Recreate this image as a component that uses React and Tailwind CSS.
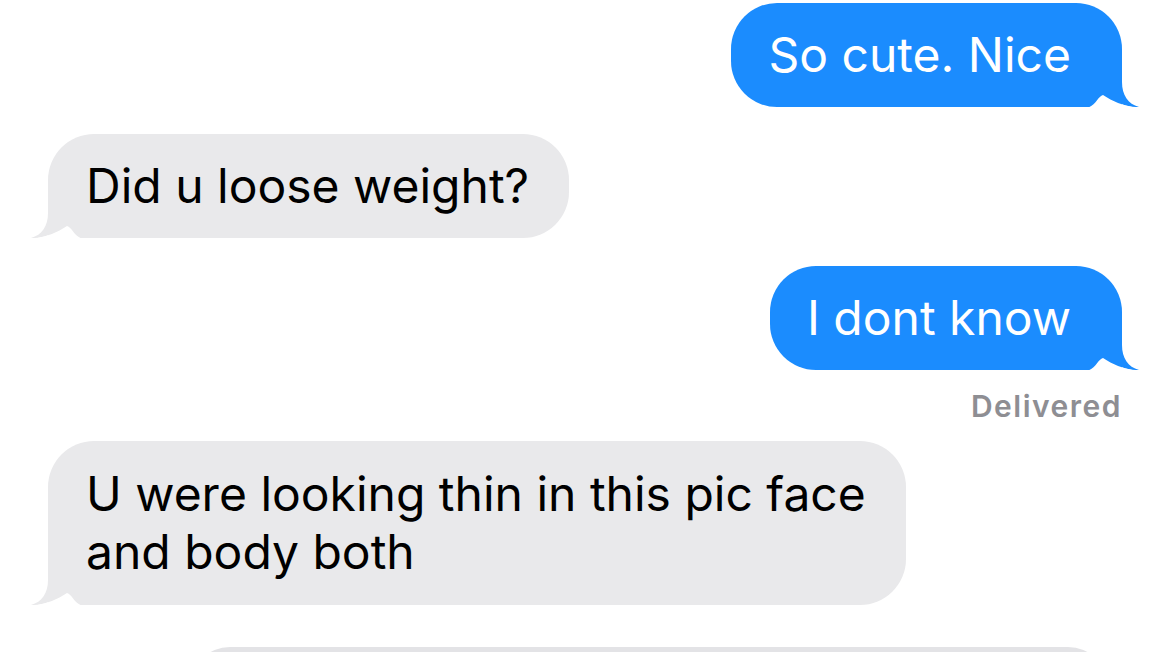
import React from "react";

const BLUE = "#1b8cfe";
const GRAY = "#e9e9eb";

function Tail({ color, side }) {
  const pos = side === "right" ? "right-[-20px]" : "left-[-20px] -scale-x-100";
  return (
    <svg
      className={`absolute bottom-0 ${pos}`}
      width="60"
      height="34"
      viewBox="0 0 60 34"
    >
      <path
        d="M16 0 L40 0 L40 9 C40 22 46 31 57 34 C47 34.5 33 30 21 22 L16 22 Z"
        fill={color}
      />
      <path
        d="M5 34.5 C13 34 16 23 21 22 C33 30 47 34.5 57 34.5 Z"
        fill="#ffffff"
      />
    </svg>
  );
}

function Bubble({ side, children, className = "" }) {
  const right = side === "right";
  return (
    <div
      className={`relative ${
        right
          ? "self-end mr-[48px] bg-[#1b8cfe] text-white rounded-[46px] rounded-br-none pl-[37px] pr-[51px]"
          : "self-start ml-[48px] bg-[#e9e9eb] text-black rounded-[46px] rounded-bl-none pl-[38px] pr-[40px]"
      } text-[48px] leading-[58px] ${className}`}
    >
      <span className="relative z-10">{children}</span>
      <Tail color={right ? BLUE : GRAY} side={side} />
    </div>
  );
}

export default function App() {
  return (
    <div
      className="w-[1170px] h-[652px] overflow-hidden bg-white flex flex-col pt-[3px]"
      style={{ fontFamily: "Inter, 'Noto Sans', sans-serif" }}
    >
      <Bubble side="right" className="py-[23px]">
        So cute. Nice
      </Bubble>
      <Bubble side="left" className="py-[23px] mt-[27px]">
        Did u loose weight?
      </Bubble>
      <Bubble side="right" className="py-[23px] mt-[28px]">
        I dont know
      </Bubble>
      <div className="self-end mr-[48px] mt-[18px] text-[30px] leading-[36px] tracking-[1.5px] font-semibold text-[#8e8e93]">
        Delivered
      </div>
      <Bubble side="left" className="py-[24px] mt-[17px]">
        U were looking thin in this pic face
        <br />
        and body both
      </Bubble>
      <div className="self-end mr-[62px] mt-[42px] w-[918px] h-[80px] shrink-0 rounded-[46px] bg-[#e3e3e6]" />
    </div>
  );
}
